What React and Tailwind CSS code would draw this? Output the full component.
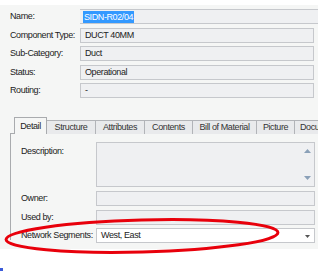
import React from "react";

const font = { fontFamily: '"Liberation Sans", Arial, sans-serif' };

const txt = "text-[9px] tracking-[-0.4px] text-[#222] leading-none whitespace-nowrap";

function Row({ label, value, mt, labelW = "w-[70px]", fieldCls }) {
  return (
    <div className={`flex items-center h-[15px] ${mt}`}>
      <div className={`${labelW} shrink-0 ${txt}`}>{label}</div>
      <div className={`h-[15px] flex items-center px-[4px] ${txt} ${fieldCls}`}>{value}</div>
    </div>
  );
}

const fieldBox = "w-[234px] bg-[#eff0f2] border border-[#c6c8cc]";
const innerBox = "w-[219px] bg-[#eff0f2] border border-[#c6c8cc]";

export default function App() {
  const tabs = [
    ["Structure", "w-[49px]"],
    ["Attributes", "w-[49px]"],
    ["Contents", "w-[48px]"],
    ["Bill of Material", "w-[64px]"],
    ["Picture", "w-[38px]"],
    ["Document", "w-[40px]"],
  ];
  return (
    <div className="relative w-[324px] h-[271px] bg-white overflow-hidden" style={font}>
      <div className="mt-[5px] w-[318px] h-[244px] bg-[#f5f6f5] pl-[10px] pt-[4px] overflow-hidden">
        <div className="flex items-center h-[15px]">
          <div className={`w-[70px] shrink-0 ${txt}`}>Name:</div>
          <div className="h-[15px] flex-1 flex items-center pl-[3px] bg-[#eff0f2] border-y border-[#c6c8cc]">
            <span className="bg-[#3399ff] text-white text-[9px] tracking-[-0.4px] leading-[12px] px-[1px]">SIDN-R02/04</span>
          </div>
        </div>
        <Row label="Component Type:" value="DUCT 40MM" mt="mt-[4px]" fieldCls={fieldBox} />
        <Row label="Sub-Category:" value="Duct" mt="mt-[3px]" fieldCls={fieldBox} />
        <Row label="Status:" value="Operational" mt="mt-[4px]" fieldCls={fieldBox} />
        <Row label="Routing:" value="-" mt="mt-[3px]" fieldCls={fieldBox} />

        <div className="mt-[19px] flex items-end h-[17px] pl-[4px]">
          <div className={`h-[17px] w-[33px] shrink-0 bg-[#f5f6f5] border border-b-0 border-[#a9abae] flex items-center justify-center relative z-10 ${txt}`}>
            Detail
          </div>
          {tabs.map(([t, w]) => (
            <div
              key={t}
              className={`h-[14px] ${w} shrink-0 bg-[#e9eaec] border border-l-0 border-b-0 border-[#b2b4b8] flex items-center ${t === "Document" ? "justify-start pl-[5px]" : "justify-center"} overflow-hidden text-[9px] tracking-[-0.4px] text-[#333] leading-none whitespace-nowrap`}
            >
              {t}
            </div>
          ))}
        </div>
        <div className="border-l border-t border-[#a9abae] h-[107px] pl-[10px] pt-[8px] -mt-px">
          <div className="flex">
            <div className={`w-[75px] shrink-0 pt-[5px] ${txt}`}>Description:</div>
            <div className="relative w-[219px] h-[45px] bg-[#eff0f2] border border-[#c6c8cc]">
              <svg className="absolute right-[3px] top-[5px]" width="7" height="5" viewBox="0 0 7 5">
                <path d="M0 5 L3.5 1 L7 5 Z" fill="#8aa0b8" />
              </svg>
              <svg className="absolute right-[3px] bottom-[5px]" width="7" height="5" viewBox="0 0 7 5">
                <path d="M0 0 L3.5 4 L7 0 Z" fill="#8aa0b8" />
              </svg>
            </div>
          </div>
          <Row label="Owner:" mt="mt-[4px]" labelW="w-[75px]" fieldCls={innerBox} value="" />
          <Row label="Used by:" mt="mt-[4px]" labelW="w-[75px]" fieldCls={innerBox} value="" />
          <div className="flex items-center h-[15px] mt-[3px]">
            <div className={`w-[75px] shrink-0 ${txt}`}>Network Segments:</div>
            <div className={`relative w-[219px] h-[15px] flex items-center px-[4px] bg-white border border-[#c6c8cc] ${txt}`}>
              West, East
              <svg className="absolute right-[4px] top-[6px]" width="5" height="3" viewBox="0 0 5 3">
                <path d="M0 0 L2.5 3 L5 0 Z" fill="#555" />
              </svg>
            </div>
          </div>
        </div>
      </div>
      <svg className="absolute left-0 top-0 pointer-events-none" width="324" height="271" viewBox="0 0 324 271">
        <ellipse cx="142" cy="236" rx="136" ry="16" fill="none" stroke="#e8000b" strokeWidth="3" transform="rotate(-1.5 142 236)" />
        <rect x="0" y="268" width="3" height="3" fill="#3b5bd9" />
      </svg>
    </div>
  );
}
